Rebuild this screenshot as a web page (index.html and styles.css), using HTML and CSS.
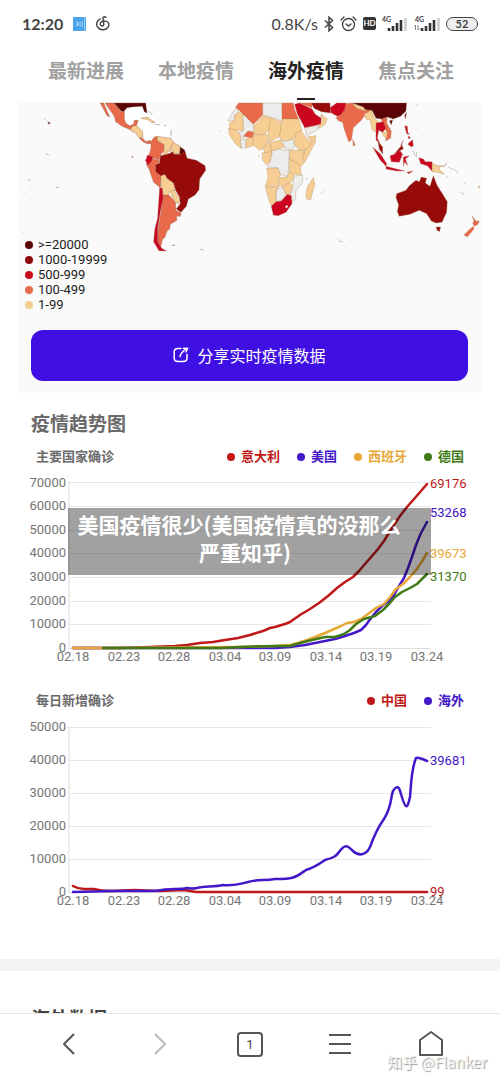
FILE: index.html
```html
<!DOCTYPE html>
<html lang="zh-CN">
<head>
    <meta charset="UTF-8">
    <meta name="viewport" content="width=device-width, initial-scale=1.0">
    <title>海外疫情</title>
    <link rel="stylesheet" href="styles.css">
</head>
<body>
<header class="status-bar">
    <span class="time">12:20</span>
    <svg class="app-icon" width="13" height="14" viewBox="0 0 13 14">
        <rect width="13" height="14" rx="1" fill="#4ba3ee"/>
        <path d="M11.5 0v14" stroke="#8ccbf7"/>
        <path d="M3 5h3M4.500 5v4M3 7h3M3 9l1.500-2 1.500 2M7 5h2.500v4H7z" fill="none" stroke="#b9dcf8" stroke-width=".7"/>
    </svg>
    <svg width="14" height="15" viewBox="0 0 14 15" fill="none" stroke="#444" stroke-width="1.4" stroke-linecap="round">
        <path d="M10 1.300C8.500.3 6.800 1 7 2.800l.8 5.200c.3 2.500-3.400 2.600-3.600.2C4.100 6 6.500 4.600 8.800 5.100"/>
        <path d="M4.300 2.900C1 4.300-.3 8 1.500 11c2.100 3.300 7.500 3.700 10.200.7 2.300-2.800 1.200-6.800-2.900-6.600"/>
    </svg>
    <div class="status-right">
        <span class="speed">0.8K/s</span>
        <svg width="10" height="16" viewBox="0 0 10 16" fill="none" stroke="#444" stroke-width="1.5">
            <path d="M1 4.500l7.500 7L5 14.800V1.200l3.500 3.300-7.500 7"/>
        </svg>
        <svg width="17" height="16" viewBox="0 0 17 16" fill="none" stroke="#444" stroke-width="1.4" stroke-linecap="round">
            <circle cx="8.500" cy="8.500" r="6"/>
            <path d="M1 4l3-3M16 4l-3-3M6 8l2.500 2L11 8"/>
        </svg>
        <span class="hd">HD</span>
        <svg width="26" height="16" viewBox="0 0 26 16">
            <text x="0" y="6" class="net">4G</text>
            <path d="M7 12v3M11 10v5M15 7v8M19 4v11" stroke="#333" stroke-width="2.600"/>
            <path d="M23.500 2v13" stroke="#ccc" stroke-width="2.600"/>
        </svg>
        <svg width="26" height="16" viewBox="0 0 26 16">
            <text x="1" y="6" class="net">4G</text>
            <path d="M1.500 14V9L0 10.500M4 9v5l1.500-1.500" fill="none" stroke="#666" stroke-width=".8"/>
            <path d="M8 12v3M12 10v5M16 7v8M20 4v11" stroke="#333" stroke-width="2.600"/>
            <path d="M24.500 2v13" stroke="#ccc" stroke-width="2.600"/>
        </svg>
        <span class="battery">52</span>
    </div>
</header>

<nav class="tabs">
    <a href="#latest">最新进展</a>
    <a href="#local">本地疫情</a>
    <a href="#overseas" class="active">海外疫情</a>
    <a href="#focus">焦点关注</a>
</nav>

<main>
    <section class="map-card">
        <div class="map">
            <svg viewBox="0 0 462 216">
                <!-- Americas -->
                <g transform="translate(-4 -7) scale(.3333)" stroke="#8a5a40" stroke-width="1">
                    <path fill="#fff" stroke="none" d="M328 50L350 34 382 34 396 56 420 72 466 100 470 130 426 124 406 138 384 124 366 92 330 80z"/>
                    <g class="c100">
                        <path d="M256 24H266L284 66 276 62z"/>
                        <path d="M270 24H298L304 32 318 50 328 50 328 72 332 84 344 92 356 88 358 76 370 76 364 92 352 98 346 104 322 94 302 80 298 64z"/>
                        <path d="M372 128L384 130 392 140 406 136 408 146 396 146 384 140z"/>
                        <path d="M408 140L418 126 428 124 426 136 448 148 446 168 436 180 432 196 414 188 402 180 408 160z"/>
                        <path d="M410 190L434 198 420 218 424 232 438 240 436 278 416 262 402 222 393 206 400 208z"/>
                        <path d="M444 300H462L482 322 482 346 498 354 496 364 484 364 486 376 466 388 464 402 456 408 450 426 442 434 438 454 428 442 430 400 440 340z"/>
                        <path d="M350 184l4 0-1 5z"/>
                    </g>
                    <g class="c1">
                        <path d="M348 98L356 92 366 92 382 108 384 126 372 128 362 114 348 108z"/>
                        <path d="M378 70L396 66 420 82 412 84 398 74z"/>
                        <path d="M426 124L440 126 468 130 476 142 466 158 466 170 456 168 458 180 446 180 448 150 428 138z"/>
                        <path d="M474 142L496 154 494 176 474 176 468 160z"/>
                        <path d="M438 240L452 236 456 250 474 262 482 286 464 290 460 300H446L438 276z"/>
                        <path d="M466 290L474 284 484 296 494 310 492 326 480 322z"/>
                    </g>
                    <path class="c20000" d="M298 24H392L396 54 388 50 382 34 350 36 336 38 326 50 318 48z"/>
                    <path class="c20000" d="M496 156L510 166 504 180 494 178zM98 80l8 4-4 4z"/>
                    <path class="c1000" d="M436 182L458 178 474 170 476 178 500 178 510 168 516 190 544 196 570 212 572 226 554 252 552 284 540 300 520 312 514 334 498 352 484 342 496 326 494 306 482 286 476 264 456 250 450 238 438 242 422 230 422 210 434 204z"/>
                    <path class="c500" d="M398 180L414 186 408 200 398 210 392 196z"/>
                    <path class="c500" d="M434 278L442 280 444 310 436 350 428 400 428 440 440 460 454 468 432 467 416 440 420 400 428 370z"/>
                    <path fill="none" stroke="#999" stroke-width="2" d="M86 70l6 4M92 176l10 4M38 253l8 5M122 277h10M28 293v2M48 282v2M24 411v2M400 48l12 12M420 88l16 2M446 92l8 0M468 104v20M470 452l10-2M474 450l6 2M556 462l10 4M612 108h3M682 268h2"/>
                </g>
                <!-- Africa, Asia, Oceania -->
                <g transform="translate(231 -7) scale(.3333)" stroke="#a8875c" stroke-width="1">
                    <g fill="#ececec">
                        <path d="M-66 78L-50 48-34 40-34 52-46 60-46 76z"/>
                        <path d="M-22 56L8 86 14 106-10 112-20 132-34 112-20 106z"/>
                        <path d="M38 24H96L98 78 60 66 38 60z"/>
                        <path d="M-30 134L-12 134-12 158-26 160z"/>
                        <path d="M92 134L104 140 130 132 134 158 120 166 104 158z"/>
                        <path d="M66 172L80 162 118 166 116 222 112 244 88 238 84 218 52 216 62 196z"/>
                        <path d="M130 244L158 240 158 262 136 290 138 312 124 320 120 300 128 280z"/>
                        <path d="M80 282L98 278 108 298 94 318 78 318z"/>
                        <path d="M164 98L204 92 206 102 170 122z"/>
                    </g>
                    <g class="c100">
                        <path d="M-44 38L-34 24H38L38 60 10 88-34 44z"/>
                        <path d="M-20 124L-6 108 12 112 6 130z"/>
                        <path d="M96 24H130L134 44 146 72H96z"/>
                        <path d="M148 24H186V38z"/>
                        <path d="M278 26L306 24 320 38 346 46 366 44 360 52 344 62 334 76 310 98 304 136 296 140 282 100 278 82 266 78 258 68 274 58z"/>
                        <path d="M308 132L316 150 310 154z"/>
                        <path d="M394 72L412 68 410 84 424 108 422 130 406 138 412 114 398 88z"/>
                        <path d="M666 362L678 378 688 378 684 388 674 394 668 386 672 378z"/>
                        <path d="M670 394L672 402 652 426 642 420 656 406z"/>
                        <path d="M198 74L212 68 216 56 208 74z"/>
                    </g>
                    <g class="c1">
                        <path d="M-62 84L-46 76-46 60-34 52-22 56-20 106-36 106-62 104z"/>
                        <path d="M-64 100L-40 106-32 116-26 132-30 140-26 160-38 152-52 134-62 120z"/>
                        <path d="M-12 132L10 126 10 152-12 158z"/>
                        <path d="M12 92L40 62 62 68 60 98 44 118 12 118z"/>
                        <path d="M10 120L50 118 56 132 40 160 28 166 8 148z"/>
                        <path d="M62 68L96 82 88 124 62 142 54 118z"/>
                        <path d="M96 72H146L156 106 142 114 130 132 104 138 88 128z"/>
                        <path d="M138 114L154 108 172 134 188 142 170 164 146 164 132 146z"/>
                        <path d="M172 126L198 122 196 142 164 202 158 186 164 168 188 142z"/>
                        <path d="M62 144L92 134 104 156 78 164 62 168z"/>
                        <path d="M40 160L58 136 64 172 44 174z"/>
                        <path d="M36 174L66 170 60 200 50 210 38 196z"/>
                        <path d="M120 166L164 166 158 188 162 204 154 214 118 192z"/>
                        <path d="M118 192L150 210 154 240 124 238 118 224z"/>
                        <path d="M50 220L84 220 92 240 84 250 86 276 46 274 54 246z"/>
                        <path d="M86 248L112 246 118 228 132 240 128 256 104 276 88 272z"/>
                        <path d="M46 276L86 278 78 286 78 318 66 334 58 320z"/>
                        <path d="M98 276L118 262 128 272 120 298 108 298z"/>
                        <path d="M190 248L194 268 182 314 170 312 168 294 174 272z"/>
                        <path d="M208 92L218 74 216 60 232 72 224 90 206 100z"/>
                        <path d="M308 26L344 38 348 48 320 40z"/>
                        <path d="M342 58L350 74 360 74 366 104 380 112 376 96 386 82 374 70 362 44 356 50z"/>
                        <path d="M396 112L412 112 410 128 402 126z"/>
                        <path d="M546 204L566 214 570 226 584 238 562 232 546 230zM566 212l20 0 4-8-6 10-16 2z"/>
                        <path d="M684 276l6-4-2 8z"/>
                    </g>
                    <g class="c500">
                        <path d="M64 334L78 320 94 318 112 298 124 302 126 326 108 352 84 362 70 360z"/>
                        <path d="M134 28L148 24 186 42 196 58 214 70 212 88 164 98 142 56z"/>
                        <path d="M240 38L260 24H288L284 44 272 60 262 64 244 54z"/>
                        <path d="M378 84L400 80 408 100 398 112 386 106 382 130 392 150 378 134z"/>
                        <path d="M464 92L472 94 474 114 480 118 470 116zM474 122l8 6-6 4zM476 144l12-10 2 18-6 4-10-8zM452 150l8-14-6 16z"/>
                        <path d="M368 156L392 178 410 206 408 214 390 194z"/>
                        <path d="M408 214L440 222 464 228 440 228 408 222zM470 232l20-4-14 8z"/>
                        <path d="M420 182L434 178 448 164 458 178 448 202 424 200z"/>
                        <path d="M460 186L478 182 466 192 474 212 464 200 460 214z"/>
                        <path d="M506 188L520 192 526 200 546 200 546 228 532 212 512 206z"/>
                    </g>
                    <g class="c1000">
                        <path d="M184 24H240L242 54 214 50 192 40z"/>
                        <path d="M384 140L398 156 398 178 388 162zM430 180L456 150 460 162 442 170z"/>
                        <path d="M440 296L468 286 478 272 498 256 508 260 514 246 530 250 526 264 540 274 550 242 562 272 576 294 592 320 590 352 576 382 558 384 544 378 530 356 508 346 480 358 448 364 442 350 446 330 438 308z"/>
                        <path d="M558 396L572 396 568 410 562 406z"/>
                    </g>
                    <g class="c20000">
                        <path d="M306 24H470L468 48 452 64 430 72 412 66 396 72 378 70 366 46 346 44 340 36z"/>
                        <path d="M418 78L428 74 424 90zM464 60L470 52 466 72z"/>
                    </g>
                    <path fill="#fff" d="M106 334l6-4 2 6-6 4z"/>
                    <path fill="none" stroke="#aaa" stroke-width="2" d="M170 248v6M214 292l4 4M26 180v6M222 290h3M490 166l6 18M500 170v16M594 216l14 8M610 220l16 16M632 292l12 8M644 262l2 6M264 432l6 8 8 0M284 456v2M144 428v2M560 108v2M520 120v2M500 32l4-6M588 246h6"/>
                </g>
            </svg>
            <ul class="map-legend">
                <li><i class="dot" style="background: #5c0305"></i>&gt;=20000</li>
                <li><i class="dot" style="background: #8f0a0c"></i>1000-19999</li>
                <li><i class="dot" style="background: #c90a1f"></i>500-999</li>
                <li><i class="dot" style="background: #e66a4c"></i>100-499</li>
                <li><i class="dot" style="background: #f5ce93"></i>1-99</li>
            </ul>
        </div>
        <button class="share-button" type="button">
            <svg width="16" height="16" viewBox="0 0 16 16" fill="none" stroke="#fff" stroke-width="1.5" stroke-linecap="round">
                <path d="M8 1.500H5Q1.200 1.500 1.200 5v6q0 3.500 3.800 3.500h5q4 0 4-3.500V7.500M7 9.500Q8 5.500 13 2M10.500 1.200l4 .3-1.500 3.500"/>
            </svg>
            <span>分享实时疫情数据</span>
        </button>
    </section>

    <section class="trend">
        <h2>疫情趋势图</h2>

        <div class="chart-head">
            <h3>主要国家确诊</h3>
            <ul class="chart-legend">
                <li class="red"><i class="dot"></i>意大利</li>
                <li class="blue"><i class="dot"></i>美国</li>
                <li class="yellow"><i class="dot"></i>西班牙</li>
                <li class="green"><i class="dot"></i>德国</li>
            </ul>
        </div>
        <div class="chart">
            <svg viewBox="19 470 462 200">
                <path class="grid" d="M68 482.500H431M68 506.500H431M68 530.500H431M68 553.500H431M68 577.500H431M68 601.500H431M68 624.500H431"/>
                <path class="axis" d="M69 482V648M68 648.500H431"/>
                <g class="y-labels">
                    <text x="66" y="487">70000</text>
                    <text x="66" y="510">60000</text>
                    <text x="66" y="534">50000</text>
                    <text x="66" y="557">40000</text>
                    <text x="66" y="581">30000</text>
                    <text x="66" y="605">20000</text>
                    <text x="66" y="628">10000</text>
                    <text x="66" y="652">0</text>
                </g>
                <g class="x-labels">
                    <text x="73" y="661">02.18</text>
                    <text x="124" y="661">02.23</text>
                    <text x="174" y="661">02.28</text>
                    <text x="225" y="661">03.04</text>
                    <text x="275" y="661">03.09</text>
                    <text x="326" y="661">03.14</text>
                    <text x="376" y="661">03.19</text>
                    <text x="427" y="661">03.24</text>
                </g>
                <polyline class="line red" points="73,648 120,648 150,647 175,646 187,645 200,643 213,642 225,640 238,638 250,635 263,631 270,628 275,627 285,624 290,622 300,615 310,609 319,603 328,596 337,588 345,582 353,577 359,571 365,564 372,556 378,549 384,541 392,528 400,516 407,507 414,499 421,491 427,484"/>
                <polyline class="line blue" points="73,648 275,648 290,647 305,645 320,642 335,639 345,636 354,633 361,630 366,625 371,618 376,612 382,606 389,601 394,595 399,586 404,578 408,568 412,557 416,545 421,533 427,522"/>
                <polyline class="line yellow" points="73,648 103,648 240,647 275,646 290,645 298,643 307,640 315,637 325,633 332,630 341,626 347,623 354,622 361,619 368,614 376,608 384,604 390,597 396,589 403,584 410,577 416,570 421,563 427,553"/>
                <polyline class="line green" points="103,648 220,648 240,647 275,646 290,646 300,643 312,640 325,637 335,637 344,634 350,630 356,624 364,619 375,616 383,610 389,604 395,597 402,592 410,588 417,584 422,579 427,574"/>
                <g class="values">
                    <text class="red" x="430" y="488">69176</text>
                    <text class="blue" x="430" y="517">53268</text>
                    <text class="yellow" x="430" y="558">39673</text>
                    <text class="green" x="430" y="581">31370</text>
                </g>
            </svg>
            <p class="caption">美国疫情很少(美国疫情真的没那么<br>严重知乎)</p>
        </div>

        <div class="chart-head second">
            <h3>每日新增确诊</h3>
            <ul class="chart-legend">
                <li class="red"><i class="dot"></i>中国</li>
                <li class="blue"><i class="dot"></i>海外</li>
            </ul>
        </div>
        <div class="chart">
            <svg viewBox="19 715 462 200">
                <path class="grid" d="M68 728.500H431M68 761.500H431M68 794.500H431M68 827.500H431M68 860.500H431"/>
                <path class="axis" d="M69 728V893M68 893.500H431"/>
                <g class="y-labels">
                    <text x="66" y="732">50000</text>
                    <text x="66" y="765">40000</text>
                    <text x="66" y="798">30000</text>
                    <text x="66" y="831">20000</text>
                    <text x="66" y="864">10000</text>
                    <text x="66" y="897">0</text>
                </g>
                <g class="x-labels">
                    <text x="73" y="906">02.18</text>
                    <text x="124" y="906">02.23</text>
                    <text x="174" y="906">02.28</text>
                    <text x="225" y="906">03.04</text>
                    <text x="275" y="906">03.09</text>
                    <text x="326" y="906">03.14</text>
                    <text x="376" y="906">03.19</text>
                    <text x="427" y="906">03.24</text>
                </g>
                <path class="line red" d="M73 887Q78 890 84 890T94 890Q100 892 113 892L134 891 160 892 184 891 196 893H427"/>
                <path class="line blue" d="M73 893L113 892 155 892Q165 890 175 890T186 889Q192 890 197 889C204 887 214 888 223 886C235 887 240 885 248 883C258 880 264 882 275 880C295 880 296 878 306 871C313 869 318 866 325 861C332 859 336 858 339 853C345 845 347 846 353 852C358 857 366 857 370 848C374 837 378 828 384 820C392 807 390 801 393 792C397 786 399 787 401 795C405 809 407 812 410 798C411 788 411 771 416 759Q418 758 427 762"/>
                <g class="values">
                    <text class="blue" x="430" y="766">39681</text>
                    <text class="red" x="430" y="897">99</text>
                </g>
            </svg>
        </div>
    </section>

    <section class="data">
        <h2>海外数据</h2>
    </section>
</main>

<footer class="browser-bar">
    <button type="button" aria-label="后退">
        <svg width="28" height="28" viewBox="0 0 28 28"><path d="M19 4L9 14l10 10"/></svg>
    </button>
    <button type="button" aria-label="前进" class="disabled">
        <svg width="28" height="28" viewBox="0 0 28 28"><path d="M9 4l10 10L9 24"/></svg>
    </button>
    <button type="button" aria-label="标签页"><span class="tab-count">1</span></button>
    <button type="button" aria-label="菜单">
        <svg width="28" height="28" viewBox="0 0 28 28"><path d="M3 5h22M3 14h22M3 23h22"/></svg>
    </button>
    <button type="button" aria-label="主页">
        <svg width="28" height="28" viewBox="0 0 28 28"><path d="M3 25V10l11-8 11 8v15z"/></svg>
    </button>
    <span class="watermark">知乎 @Flanker</span>
</footer>
</body>
</html>
```

FILE: styles.css
```css
* {
    box-sizing: border-box;
}

body {
    display: flex;
    flex-direction: column;
    height: 100vh;
    margin: 0;
    overflow: hidden;
    background: #fff;
    color: #6a6a6a;
    font-family: Roboto, "Noto Sans CJK SC", sans-serif;
}

h2, h3, ul, p {
    margin: 0;
    padding: 0;
}

ul {
    list-style: none;
}

svg {
    display: block;
    flex-shrink: 0;
}

button {
    padding: 0;
    border: none;
    background: none;
    font-family: inherit;
    cursor: pointer;
}

/* Status bar */
.status-bar {
    display: flex;
    align-items: center;
    flex-shrink: 0;
    gap: 10px;
    height: 47px;
    padding: 0 22px;
    color: #444;
    font-family: Lato, sans-serif;
    font-size: 16px;
}

.time {
    font-weight: bold;
}

.status-right {
    display: flex;
    align-items: center;
    gap: 6px;
    margin-left: auto;
}

.hd {
    width: 13px;
    border-radius: 2px;
    background: #333;
    color: #fff;
    font-size: 8px;
    font-weight: bold;
    line-height: 13px;
    text-align: center;
}

.net {
    fill: #444;
    font-size: 7px;
    font-weight: bold;
}

.battery {
    width: 32px;
    border: 1px solid #444;
    border-radius: 7px;
    background: #eee;
    font-size: 11px;
    font-weight: bold;
    line-height: 12px;
    text-align: center;
}

/* Tabs */
.tabs {
    display: flex;
    flex-shrink: 0;
    justify-content: space-between;
    height: 55px;
    padding: 0 46px 0 48px;
}

.tabs a {
    color: #a0a0a0;
    font-size: 19px;
    font-weight: bold;
    line-height: 50px;
    text-decoration: none;
}

.tabs .active {
    color: #222;
}

.tabs .active::after {
    content: "";
    display: block;
    width: 18px;
    height: 2px;
    margin: 1px auto 0;
    background: #222;
}

main {
    flex: 1;
    min-height: 0;
    overflow: hidden;
}

/* Map */
.map-card {
    margin: 0 19px;
    padding-bottom: 12px;
    background: #fafafa;
}

.map {
    position: relative;
}

.c20000 { fill: #5c0305; }
.c1000 { fill: #960a0a; }
.c500 { fill: #cb0520; }
.c100 { fill: #e9694b; }
.c1 { fill: #f6ce94; }

.map-legend {
    position: absolute;
    left: 6px;
    bottom: 6px;
    color: #222;
    font-size: 13px;
    line-height: 15px;
}

.map-legend li {
    display: flex;
    align-items: center;
    gap: 5px;
}

.dot {
    width: 8px;
    height: 8px;
    border-radius: 50%;
    background: currentColor;
}

.share-button {
    display: flex;
    align-items: center;
    justify-content: center;
    gap: 8px;
    width: calc(100% - 25px);
    height: 51px;
    margin: 12px 12px 0;
    padding-bottom: 2px;
    border-radius: 12px;
    background: #400fe3;
    color: #fff;
    font-size: 16px;
}

/* Charts */
.trend {
    margin: 0 19px;
    padding: 18px 0 45px;
}

h2 {
    padding-left: 12px;
    font-size: 19px;
    font-weight: bold;
    line-height: 28px;
}

.chart-head {
    display: flex;
    justify-content: space-between;
    margin-top: 8px;
    padding: 0 17px;
    font-size: 13px;
    line-height: 20px;
}

.second {
    margin-top: 21px;
}

h3 {
    font-size: 13px;
    font-weight: bold;
}

.chart-legend {
    display: flex;
    gap: 17px;
    font-weight: bold;
}

.chart-legend li {
    display: flex;
    align-items: center;
    gap: 6px;
}

.red { color: #c01818; }
.blue { color: #4418c8; }
.yellow { color: #e8a838; }
.green { color: #3f7a14; }

.chart {
    position: relative;
    margin-top: 3px;
}

.chart text {
    fill: #757575;
    font-size: 13px;
}

.chart .values text {
    fill: currentColor;
}

.y-labels {
    text-anchor: end;
}

.x-labels {
    text-anchor: middle;
}

.grid {
    stroke: #e8e8e8;
}

.axis {
    stroke: #ddd;
}

.line {
    fill: none;
    stroke: currentColor;
    stroke-width: 2.5;
    stroke-linecap: round;
    stroke-linejoin: round;
}

.caption {
    position: absolute;
    top: 38px;
    left: 49px;
    right: 50px;
    height: 67px;
    padding: 2px 9px 0 0;
    background: rgba(0, 0, 0, 0.37);
    color: #fff;
    font-family: "Noto Sans CJK SC", sans-serif;
    font-size: 21px;
    font-weight: bold;
    line-height: 28px;
    text-align: center;
    text-indent: -12px;
    white-space: nowrap;
}

.data {
    padding: 35px 19px 0;
    border-top: 12px solid #f3f3f3;
    color: #444;
}

/* Bottom bar */
.browser-bar {
    position: relative;
    display: flex;
    flex-shrink: 0;
    justify-content: space-around;
    height: 70px;
    padding: 0 23px 9px;
    border-top: 1px solid #e8e8e8;
}

.browser-bar svg {
    fill: none;
    stroke: #555;
    stroke-width: 2;
    stroke-linejoin: round;
}

.browser-bar .disabled svg {
    stroke: #bbb;
}

.tab-count {
    display: block;
    width: 26px;
    border: 2px solid #555;
    border-radius: 4px;
    color: #444;
    font-size: 13px;
    line-height: 21px;
}

.watermark {
    position: absolute;
    right: 13px;
    bottom: 10px;
    color: #f4f4f4;
    font-family: "Noto Sans CJK SC", sans-serif;
    font-size: 15px;
    line-height: 22px;
    text-shadow: 1px 1px 1px #999;
}
```
